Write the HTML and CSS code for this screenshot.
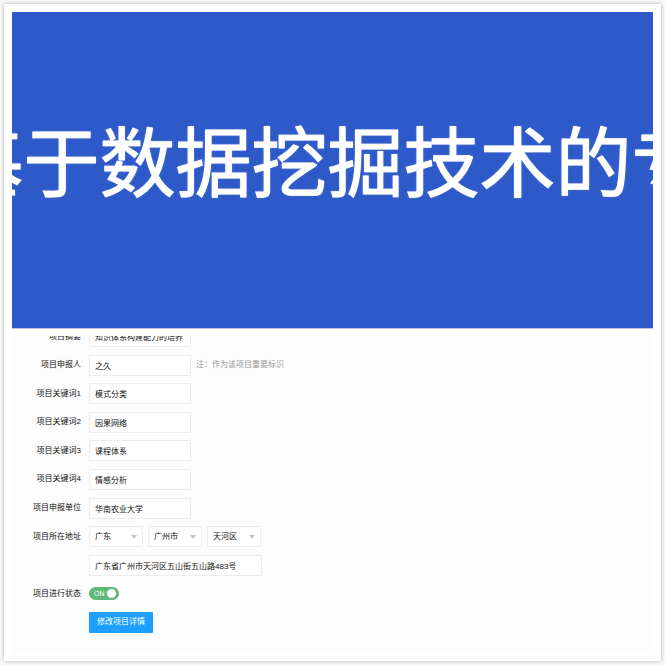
FILE: index.html
```html
<!DOCTYPE html>
<html lang="zh-CN">
<head>
<meta charset="utf-8">
<meta name="viewport" content="width=device-width, initial-scale=1">
<title>项目详情</title>
<link rel="stylesheet" href="styles.css">
</head>
<body>
<main class="card">
  <header class="banner"><h1 class="banner-title">基于数据挖掘技术的专</h1></header>
  <section class="panel">
    <form class="form">
      <div class="row">
        <label class="label" for="summary">项目摘要</label>
        <input class="field" id="summary" type="text" value="知识体系构建能力的培养">
      </div>
      <div class="row">
        <label class="label" for="applicant">项目申报人</label>
        <input class="field" id="applicant" type="text" value="之久">
        <span class="hint">注：作为该项目重要标识</span>
      </div>
      <div class="row">
        <label class="label" for="key1">项目关键词1</label>
        <input class="field" id="key1" type="text" value="模式分类">
      </div>
      <div class="row">
        <label class="label" for="key2">项目关键词2</label>
        <input class="field" id="key2" type="text" value="因果网络">
      </div>
      <div class="row">
        <label class="label" for="key3">项目关键词3</label>
        <input class="field" id="key3" type="text" value="课程体系">
      </div>
      <div class="row">
        <label class="label" for="key4">项目关键词4</label>
        <input class="field" id="key4" type="text" value="情感分析">
      </div>
      <div class="row">
        <label class="label" for="unit">项目申报单位</label>
        <input class="field" id="unit" type="text" value="华南农业大学">
      </div>
      <div class="row">
        <label class="label" for="province">项目所在地址</label>
        <div class="selects">
          <span class="select-box"><select class="field select" id="province"><option>广东</option></select></span>
          <span class="select-box"><select class="field select" aria-label="城市"><option>广州市</option></select></span>
          <span class="select-box"><select class="field select" aria-label="区县"><option>天河区</option></select></span>
        </div>
      </div>
      <div class="row">
        <span class="label"></span>
        <input class="field field-wide" type="text" aria-label="详细地址" value="广东省广州市天河区五山街五山路483号">
      </div>
      <div class="row">
        <label class="label" for="status">项目进行状态</label>
        <span class="switch">
          <input class="switch-input" id="status" type="checkbox" checked>
          <span class="switch-text">ON</span>
          <span class="switch-knob"></span>
        </span>
      </div>
      <div class="row">
        <span class="label"></span>
        <button class="submit" type="button">修改项目详情</button>
      </div>
    </form>
  </section>
</main>
</body>
</html>
```
FILE: styles.css
```css
* {
  box-sizing: border-box;
}

body {
  margin: 0;
  padding: 4px;
  min-height: 100vh;
  display: flex;
  background: #f9f9f9;
  color: #111;
  font-family: "Liberation Sans", "Noto Sans CJK SC", sans-serif;
  font-size: 8px;
  line-height: 12px;
}

.card {
  flex: 1;
  min-width: 0;
  display: flex;
  flex-direction: column;
  gap: 7px;
  padding: 8px;
  background: #fff;
  box-shadow: 0 0 4px rgba(0, 0, 0, 0.3);
}

.banner {
  height: 317px;
  padding: 0 10px 10px 0;
  display: flex;
  align-items: center;
  justify-content: center;
  overflow: hidden;
  background: #2e59c9;
  border-bottom: 1px solid #c9bfe6;
}

.banner-title {
  margin: 0;
  flex: none;
  color: #fff;
  font-size: 76px;
  font-weight: 400;
  line-height: 100px;
  white-space: nowrap;
  -webkit-text-stroke: 1px #fff;
  text-shadow: 0 0 2px rgba(255, 255, 255, 0.6);
}

.panel {
  flex: 1;
  display: flex;
  overflow: hidden;
  padding-bottom: 20px;
  background: #fdfdfd;
}

.form {
  flex: 1;
  margin-top: -10px;
  display: flex;
  flex-direction: column;
  justify-content: space-between;
}

.row {
  display: flex;
  align-items: center;
  height: 21px;
}

.label {
  width: 69px;
  margin-right: 8px;
  text-align: right;
}

.field {
  width: 102px;
  height: 21px;
  padding: 0 5px;
  border: 1px solid #ececec;
  border-radius: 1px;
  background: #fff;
  color: #111;
  font: inherit;
  outline: 0;
}

.field-wide {
  width: 173px;
}

.hint {
  margin-left: 5px;
  color: #999;
}

.selects {
  display: flex;
  gap: 5px;
}

.select-box {
  position: relative;
  width: 54px;
}

.select-box::after {
  content: "";
  position: absolute;
  top: 9px;
  right: 6px;
  border: 3px solid transparent;
  border-top: 4px solid #c2c2c2;
  border-bottom: 0;
  pointer-events: none;
}

.select {
  display: block;
  width: 100%;
  appearance: none;
}

.switch {
  position: relative;
  display: flex;
  align-items: center;
  justify-content: space-between;
  width: 30px;
  height: 13px;
  padding: 0 3px 0 5px;
  border-radius: 7px;
  background: #5fb878;
}

.switch-input {
  position: absolute;
  inset: 0;
  width: 100%;
  height: 100%;
  margin: 0;
  opacity: 0;
}

.switch-text {
  color: #fff;
  font-size: 7px;
}

.switch-knob {
  width: 9px;
  height: 9px;
  border-radius: 50%;
  background: #fff;
}

.submit {
  height: 21px;
  padding: 0 8px;
  border: 0;
  border-radius: 1px;
  background: #1e9fff;
  color: #fff;
  font: inherit;
}
```
